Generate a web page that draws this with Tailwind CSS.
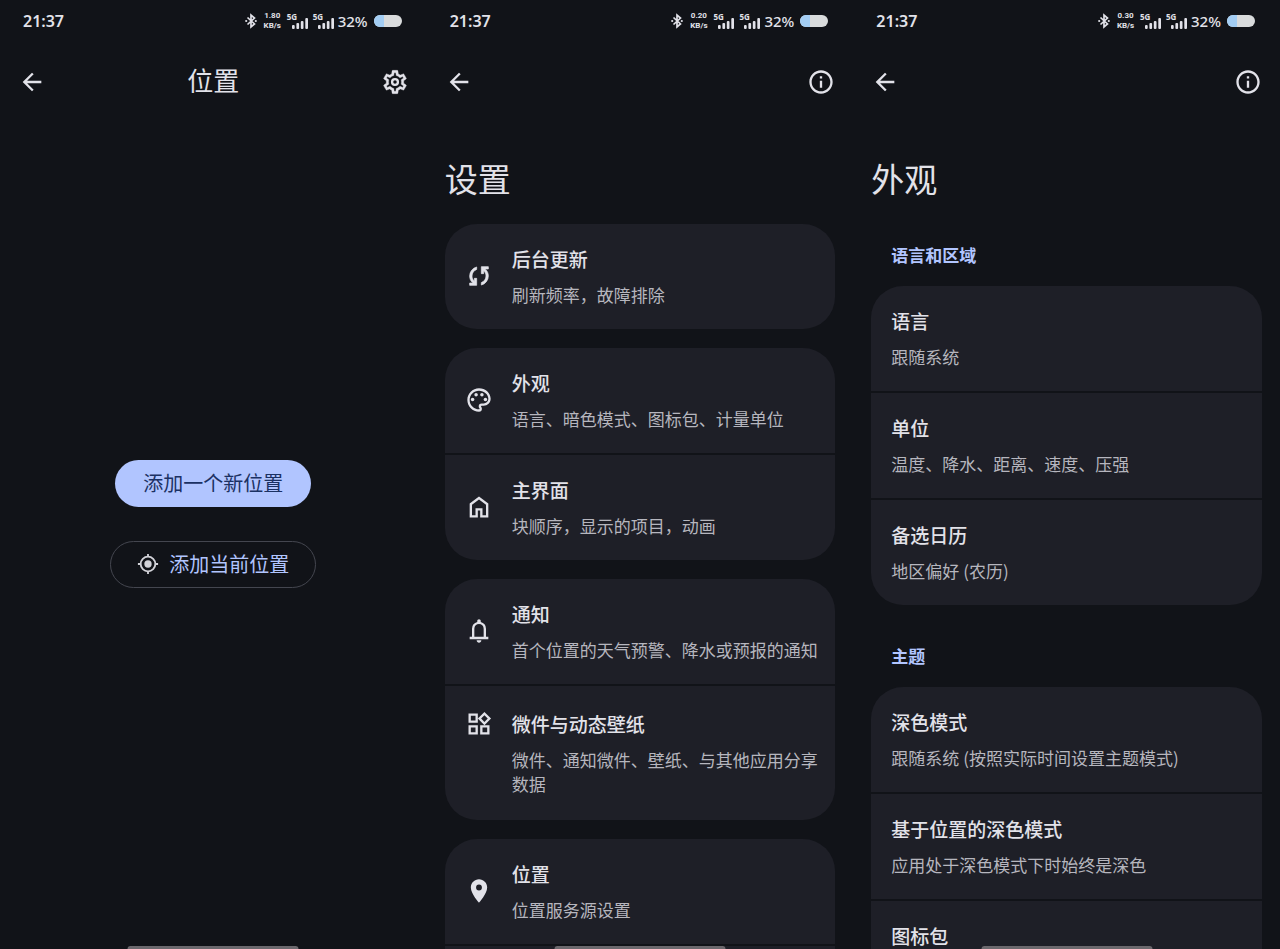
<!DOCTYPE html>
<html lang="zh-CN">
<head>
  <meta charset="UTF-8" />
  <meta name="viewport" content="width=device-width, initial-scale=1.0" />
  <title>天气设置</title>
  <script src="https://cdn.jsdelivr.net/npm/@tailwindcss/browser@4"></script>
</head>
<body class="h-screen overflow-hidden bg-[#111318] text-[#e2e2e9] font-['Noto_Sans_CJK_SC',sans-serif]">
  <!-- Icon sprite -->
  <svg class="hidden" xmlns="http://www.w3.org/2000/svg">
    <symbol id="i-back" viewBox="0 0 24 24"><path d="M20 11H7.83l5.59-5.59L12 4l-8 8 8 8 1.41-1.41L7.83 13H20v-2z" /></symbol>
    <symbol id="i-info" viewBox="0 0 24 24"><path d="M11 7h2v2h-2V7zm0 4h2v6h-2v-6zm1-9C6.48 2 2 6.48 2 12s4.48 10 10 10 10-4.48 10-10S17.52 2 12 2zm0 18c-4.41 0-8-3.59-8-8s3.59-8 8-8 8 3.59 8 8-3.59 8-8 8z" /></symbol>
    <symbol id="i-settings" viewBox="0 0 24 24">
      <path d="M19.43 12.98c.04-.32.07-.64.07-.98 0-.34-.03-.66-.07-.98l2.11-1.65c.19-.15.24-.42.12-.64l-2-3.46c-.09-.16-.26-.25-.44-.25-.06 0-.12.01-.17.03l-2.49 1c-.52-.4-1.08-.73-1.69-.98l-.38-2.65C14.46 2.18 14.25 2 14 2h-4c-.25 0-.46.18-.49.42l-.38 2.65c-.61.25-1.17.59-1.69.98l-2.49-1c-.06-.02-.12-.03-.18-.03-.17 0-.34.09-.43.25l-2 3.46c-.13.22-.07.49.12.64l2.11 1.65c-.04.32-.07.65-.07.98 0 .33.03.66.07.98l-2.11 1.65c-.19.15-.24.42-.12.64l2 3.46c.09.16.26.25.44.25.06 0 .12-.01.17-.03l2.49-1c.52.4 1.08.73 1.69.98l.38 2.65c.03.24.24.42.49.42h4c.25 0 .46-.18.49-.42l.38-2.65c.61-.25 1.17-.59 1.69-.98l2.49 1c.06.02.12.03.18.03.17 0 .34-.09.43-.25l2-3.46c.12-.22.07-.49-.12-.64l-2.11-1.65zm-1.98-1.71c.04.31.05.52.05.73 0 .21-.02.43-.05.73l-.14 1.13.89.7 1.08.84-.7 1.21-1.27-.51-1.04-.42-.9.68c-.43.32-.84.56-1.25.73l-1.06.43-.16 1.13-.2 1.35h-1.4l-.19-1.35-.16-1.13-1.06-.43c-.43-.18-.83-.41-1.23-.71l-.91-.7-1.06.43-1.27.51-.7-1.21 1.08-.84.89-.7-.14-1.13c-.03-.31-.05-.54-.05-.74s.02-.43.05-.73l.14-1.13-.89-.7-1.08-.84.7-1.21 1.27.51 1.04.42.9-.68c.43-.32.84-.56 1.25-.73l1.06-.43.16-1.13.2-1.35h1.39l.19 1.35.16 1.13 1.06.43c.43.18.83.41 1.23.71l.91.7 1.06-.43 1.27-.51.7 1.21-1.07.85-.89.7.14 1.13z" stroke="currentColor" stroke-width=".3" />
      <circle cx="12" cy="12" r="2.5" fill="none" stroke="currentColor" stroke-width="2" />
    </symbol>
    <symbol id="i-sync" viewBox="0 0 24 24"><path d="M4 20v-2h2.75l-.4-.35q-1.225-1.225-1.787-2.662T4 12.05q0-2.775 1.663-4.937T10 4.25v2.1Q8.2 7 7.1 8.563T6 12.05q0 1.125.425 2.188T7.75 16.2l.25.25V14h2v6H4Zm10-.25v-2.1q1.8-.65 2.9-2.212T18 11.95q0-1.125-.425-2.187T16.25 7.8L16 7.55V10h-2V4h6v2h-2.75l.4.35q1.225 1.225 1.788 2.663T20 11.95q0 2.775-1.662 4.938T14 19.75Z" stroke="currentColor" stroke-width=".6" /></symbol>
    <symbol id="i-palette" viewBox="0 0 24 24">
      <path d="M12 22C6.49 22 2 17.51 2 12S6.49 2 12 2s10 4.04 10 9c0 3.31-2.69 6-6 6h-1.77c-.28 0-.5.22-.5.5 0 .12.05.23.13.33.41.47.64 1.06.64 1.67A2.5 2.5 0 0 1 12 22zm0-18c-4.41 0-8 3.59-8 8s3.59 8 8 8c.28 0 .5-.22.5-.5a.54.54 0 0 0-.14-.35c-.41-.46-.63-1.05-.63-1.65a2.5 2.5 0 0 1 2.5-2.5H16c2.21 0 4-1.79 4-4 0-3.86-3.59-7-8-7z" />
      <circle cx="6.5" cy="11.5" r="1.5" /><circle cx="9.5" cy="7.5" r="1.5" /><circle cx="14.5" cy="7.5" r="1.5" /><circle cx="17.5" cy="11.5" r="1.5" />
    </symbol>
    <symbol id="i-home" viewBox="0 0 24 24"><path d="M6 19h3v-6h6v6h3v-9l-6-4.5L6 10v9Zm-2 2V9l8-6 8 6v12h-7v-6h-2v6H4Z" /></symbol>
    <symbol id="i-bell" viewBox="0 0 24 24"><path d="M4 19v-2h2v-7q0-2.075 1.25-3.687T10.5 4.2v-.7q0-.625.438-1.062T12 2q.625 0 1.063.438T13.5 3.5v.7q2 .5 3.25 2.113T18 10v7h2v2H4Zm8 3q-.825 0-1.412-.587T10 20h4q0 .825-.587 1.413T12 22Zm-4-5h8v-7q0-1.65-1.175-2.825T12 6q-1.65 0-2.825 1.175T8 10v7Z" /></symbol>
    <symbol id="i-widgets" viewBox="0 0 24 24"><path d="M16.66 4.52l2.83 2.83-2.83 2.83-2.83-2.83 2.83-2.83M9 5v4H5V5h4m10 10v4h-4v-4h4M9 15v4H5v-4h4m7.66-13.31L11 7.34 16.66 13l5.66-5.66-5.66-5.65zM11 3H3v8h8V3zm10 10h-8v8h8v-8zm-10 0H3v8h8v-8z" /></symbol>
    <symbol id="i-pin" viewBox="0 0 24 24"><path d="M12 2C8.13 2 5 5.13 5 9c0 5.25 7 13 7 13s7-7.75 7-13c0-3.87-3.13-7-7-7zm0 9.5a2.5 2.5 0 0 1 0-5 2.5 2.5 0 0 1 0 5z" /></symbol>
    <symbol id="i-locate" viewBox="0 0 24 24">
      <circle cx="12" cy="12" r="8" fill="none" stroke="currentColor" stroke-width="2" />
      <circle cx="12" cy="12" r="4" />
      <path d="M11 1h2v3h-2zM11 20h2v3h-2zM1 11h3v2H1zM20 11h3v2h-3z" />
    </symbol>
    <symbol id="i-bluetooth" viewBox="0 0 12 16">
      <path d="M2.5 4.5l7 6.5L6 14V2l3.500 3-7 6.500" fill="none" stroke="currentColor" stroke-width="1.700" />
      <circle cx="1.200" cy="8" r="1.100" /><circle cx="10.800" cy="8" r="1.100" />
    </symbol>
    <symbol id="i-signal" viewBox="0 0 16 12">
      <rect x="0" y="8" width="2.700" height="4" rx="1" /><rect x="4.400" y="6" width="2.700" height="6" rx="1" /><rect x="8.800" y="4" width="2.700" height="8" rx="1" /><rect x="13.300" y="1" width="2.700" height="11" rx="1" />
    </symbol>
  </svg>

  <div class="grid h-full grid-cols-3">
    <!-- Locations -->
    <section class="relative flex flex-col overflow-hidden">
      <div class="flex h-[42px] shrink-0 items-center justify-between pl-[23px] pr-[25px] font-['Noto_Sans',sans-serif] font-semibold">
        <span class="text-base">21:37</span>
        <div class="flex items-center">
          <svg class="h-4 w-3 fill-current"><use href="#i-bluetooth" /></svg>
          <div class="ml-[6px] w-[19px] text-center font-[Roboto,sans-serif] text-[8px] leading-[10px] font-bold"><div>1.80</div><div>KB/s</div></div>
          <div class="relative ml-[5px] flex h-4 w-[21px] items-end justify-end"><span class="absolute top-0 left-0 text-[8px] leading-[8px] font-bold">5G</span><svg class="h-3 w-4 fill-current"><use href="#i-signal" /></svg></div>
          <div class="relative ml-[5px] flex h-4 w-[21px] items-end justify-end"><span class="absolute top-0 left-0 text-[8px] leading-[8px] font-bold">5G</span><svg class="h-3 w-4 fill-current"><use href="#i-signal" /></svg></div>
          <span class="ml-1 text-[15px] font-medium">32%</span>
          <div class="ml-[6px] h-3 w-7 overflow-hidden rounded-full bg-[#d9dbdc]"><div class="h-full w-[10px] bg-[#a3cdf3]"></div></div>
        </div>
      </div>
      <header class="grid h-20 shrink-0 grid-cols-[28px_1fr_28px] items-center px-[18px]">
        <button type="button" aria-label="返回"><svg class="size-7 fill-current"><use href="#i-back" /></svg></button>
        <h1 class="pb-1 text-center text-[26px] leading-10">位置</h1>
        <button type="button" aria-label="设置"><svg class="size-7 fill-current"><use href="#i-settings" /></svg></button>
      </header>
      <main class="flex flex-1 flex-col items-center justify-center gap-[34px] pb-6">
        <button type="button" class="h-[47px] rounded-full bg-[#b1c5ff] px-7 text-[20px] text-[#1b3163]">添加一个新位置</button>
        <button type="button" class="flex h-[47px] items-center gap-[10px] rounded-full border border-[#44464f] px-[26px] text-[20px] text-[#b1c5ff]">
          <svg class="size-[22px] fill-current text-[#d2d2d8]"><use href="#i-locate" /></svg>
          添加当前位置
        </button>
      </main>
      <div class="absolute bottom-0 left-1/2 h-[3px] w-[171px] -translate-x-1/2 rounded-t-sm bg-[#6b686d]"></div>
    </section>

    <!-- Settings -->
    <section class="relative flex flex-col overflow-hidden">
      <div class="flex h-[42px] shrink-0 items-center justify-between pl-[23px] pr-[25px] font-['Noto_Sans',sans-serif] font-semibold">
        <span class="text-base">21:37</span>
        <div class="flex items-center">
          <svg class="h-4 w-3 fill-current"><use href="#i-bluetooth" /></svg>
          <div class="ml-[6px] w-[19px] text-center font-[Roboto,sans-serif] text-[8px] leading-[10px] font-bold"><div>0.20</div><div>KB/s</div></div>
          <div class="relative ml-[5px] flex h-4 w-[21px] items-end justify-end"><span class="absolute top-0 left-0 text-[8px] leading-[8px] font-bold">5G</span><svg class="h-3 w-4 fill-current"><use href="#i-signal" /></svg></div>
          <div class="relative ml-[5px] flex h-4 w-[21px] items-end justify-end"><span class="absolute top-0 left-0 text-[8px] leading-[8px] font-bold">5G</span><svg class="h-3 w-4 fill-current"><use href="#i-signal" /></svg></div>
          <span class="ml-1 text-[15px] font-medium">32%</span>
          <div class="ml-[6px] h-3 w-7 overflow-hidden rounded-full bg-[#d9dbdc]"><div class="h-full w-[10px] bg-[#a3cdf3]"></div></div>
        </div>
      </div>
      <header class="flex h-20 shrink-0 items-center justify-between px-[18px]">
        <button type="button" aria-label="返回"><svg class="size-7 fill-current"><use href="#i-back" /></svg></button>
        <button type="button" aria-label="关于"><svg class="size-7 fill-current"><use href="#i-info" /></svg></button>
      </header>
      <main class="px-[18px] pt-9">
        <h1 class="mb-[26px] text-[33px] leading-10">设置</h1>
        <div class="flex flex-col gap-[19px]">
          <ul class="flex flex-col gap-[2px] overflow-hidden rounded-[32px]">
            <li>
              <a href="#" class="flex items-center gap-[19px] bg-[#1e1f27] pt-[21px] pr-4 pb-[22px] pl-5">
                <svg class="size-7 shrink-0 fill-current"><use href="#i-sync" /></svg>
                <div><h2 class="mb-[10px] text-[19px] leading-7 font-medium">后台更新</h2><p class="text-[17px] leading-6 text-[#b6b6be]">刷新频率，故障排除</p></div>
              </a>
            </li>
          </ul>
          <ul class="flex flex-col gap-[2px] overflow-hidden rounded-[32px]">
            <li>
              <a href="#" class="flex items-center gap-[19px] bg-[#1e1f27] pt-[21px] pr-4 pb-[22px] pl-5">
                <svg class="size-7 shrink-0 fill-current"><use href="#i-palette" /></svg>
                <div><h2 class="mb-[10px] text-[19px] leading-7 font-medium">外观</h2><p class="text-[17px] leading-6 text-[#b6b6be]">语言、暗色模式、图标包、计量单位</p></div>
              </a>
            </li>
            <li>
              <a href="#" class="flex items-center gap-[19px] bg-[#1e1f27] pt-[21px] pr-4 pb-[22px] pl-5">
                <svg class="size-7 shrink-0 fill-current"><use href="#i-home" /></svg>
                <div><h2 class="mb-[10px] text-[19px] leading-7 font-medium">主界面</h2><p class="text-[17px] leading-6 text-[#b6b6be]">块顺序，显示的项目，动画</p></div>
              </a>
            </li>
          </ul>
          <ul class="flex flex-col gap-[2px] overflow-hidden rounded-[32px]">
            <li>
              <a href="#" class="flex items-center gap-[19px] bg-[#1e1f27] pt-[21px] pr-4 pb-[22px] pl-5">
                <svg class="size-7 shrink-0 fill-current"><use href="#i-bell" /></svg>
                <div><h2 class="mb-[10px] text-[19px] leading-7 font-medium">通知</h2><p class="text-[17px] leading-6 text-[#b6b6be]">首个位置的天气预警、降水或预报的通知</p></div>
              </a>
            </li>
            <li>
              <!-- Three-line item: icon lines up with the title -->
              <a href="#" class="flex items-start gap-[19px] bg-[#1e1f27] py-6 pr-4 pl-5">
                <svg class="size-7 shrink-0 fill-current"><use href="#i-widgets" /></svg>
                <div><h2 class="mb-[10px] text-[19px] leading-7 font-medium">微件与动态壁纸</h2><p class="text-[17px] leading-6 text-[#b6b6be]">微件、通知微件、壁纸、与其他应用分享数据</p></div>
              </a>
            </li>
          </ul>
          <ul class="flex flex-col gap-[2px] overflow-hidden rounded-t-[32px]">
            <li>
              <a href="#" class="flex items-center gap-[19px] bg-[#1e1f27] pt-[21px] pr-4 pb-[22px] pl-5">
                <svg class="size-7 shrink-0 fill-current"><use href="#i-pin" /></svg>
                <div><h2 class="mb-[10px] text-[19px] leading-7 font-medium">位置</h2><p class="text-[17px] leading-6 text-[#b6b6be]">位置服务源设置</p></div>
              </a>
            </li>
            <li class="h-6 bg-[#1e1f27]"></li>
          </ul>
        </div>
      </main>
      <div class="absolute bottom-0 left-1/2 h-[3px] w-[171px] -translate-x-1/2 rounded-t-sm bg-[#6b686d]"></div>
    </section>

    <!-- Appearance -->
    <section class="relative flex flex-col overflow-hidden">
      <div class="flex h-[42px] shrink-0 items-center justify-between pl-[23px] pr-[25px] font-['Noto_Sans',sans-serif] font-semibold">
        <span class="text-base">21:37</span>
        <div class="flex items-center">
          <svg class="h-4 w-3 fill-current"><use href="#i-bluetooth" /></svg>
          <div class="ml-[6px] w-[19px] text-center font-[Roboto,sans-serif] text-[8px] leading-[10px] font-bold"><div>0.30</div><div>KB/s</div></div>
          <div class="relative ml-[5px] flex h-4 w-[21px] items-end justify-end"><span class="absolute top-0 left-0 text-[8px] leading-[8px] font-bold">5G</span><svg class="h-3 w-4 fill-current"><use href="#i-signal" /></svg></div>
          <div class="relative ml-[5px] flex h-4 w-[21px] items-end justify-end"><span class="absolute top-0 left-0 text-[8px] leading-[8px] font-bold">5G</span><svg class="h-3 w-4 fill-current"><use href="#i-signal" /></svg></div>
          <span class="ml-1 text-[15px] font-medium">32%</span>
          <div class="ml-[6px] h-3 w-7 overflow-hidden rounded-full bg-[#d9dbdc]"><div class="h-full w-[10px] bg-[#a3cdf3]"></div></div>
        </div>
      </div>
      <header class="flex h-20 shrink-0 items-center justify-between px-[18px]">
        <button type="button" aria-label="返回"><svg class="size-7 fill-current"><use href="#i-back" /></svg></button>
        <button type="button" aria-label="关于"><svg class="size-7 fill-current"><use href="#i-info" /></svg></button>
      </header>
      <main class="px-[18px] pt-9">
        <h1 class="mb-[26px] text-[33px] leading-10">外观</h1>
        <div class="flex flex-col gap-5">
          <div>
            <h2 class="py-[19px] pl-5 text-[17px] leading-6 font-bold text-[#b1c5ff]">语言和区域</h2>
            <ul class="flex flex-col gap-[2px] overflow-hidden rounded-[32px]">
              <li>
                <a href="#" class="block bg-[#1e1f27] pt-[21px] pr-4 pb-[22px] pl-5"><h3 class="mb-[10px] text-[19px] leading-7 font-medium">语言</h3><p class="text-[17px] leading-6 text-[#b6b6be]">跟随系统</p></a>
              </li>
              <li>
                <a href="#" class="block bg-[#1e1f27] pt-[21px] pr-4 pb-[22px] pl-5"><h3 class="mb-[10px] text-[19px] leading-7 font-medium">单位</h3><p class="text-[17px] leading-6 text-[#b6b6be]">温度、降水、距离、速度、压强</p></a>
              </li>
              <li>
                <a href="#" class="block bg-[#1e1f27] pt-[21px] pr-4 pb-[22px] pl-5"><h3 class="mb-[10px] text-[19px] leading-7 font-medium">备选日历</h3><p class="text-[17px] leading-6 text-[#b6b6be]">地区偏好 (农历)</p></a>
              </li>
            </ul>
          </div>
          <div>
            <h2 class="py-[19px] pl-5 text-[17px] leading-6 font-bold text-[#b1c5ff]">主题</h2>
            <ul class="flex flex-col gap-[2px] overflow-hidden rounded-t-[32px]">
              <li>
                <a href="#" class="block bg-[#1e1f27] pt-[21px] pr-4 pb-[22px] pl-5"><h3 class="mb-[10px] text-[19px] leading-7 font-medium">深色模式</h3><p class="text-[17px] leading-6 text-[#b6b6be]">跟随系统 (按照实际时间设置主题模式)</p></a>
              </li>
              <li>
                <a href="#" class="block bg-[#1e1f27] pt-[21px] pr-4 pb-[22px] pl-5"><h3 class="mb-[10px] text-[19px] leading-7 font-medium">基于位置的深色模式</h3><p class="text-[17px] leading-6 text-[#b6b6be]">应用处于深色模式下时始终是深色</p></a>
              </li>
              <li>
                <a href="#" class="block bg-[#1e1f27] pt-[21px] pr-4 pb-[22px] pl-5"><h3 class="text-[19px] leading-7 font-medium">图标包</h3></a>
              </li>
            </ul>
          </div>
        </div>
      </main>
      <div class="absolute bottom-0 left-1/2 h-[3px] w-[171px] -translate-x-1/2 rounded-t-sm bg-[#6b686d]"></div>
    </section>
  </div>
</body>
</html>
